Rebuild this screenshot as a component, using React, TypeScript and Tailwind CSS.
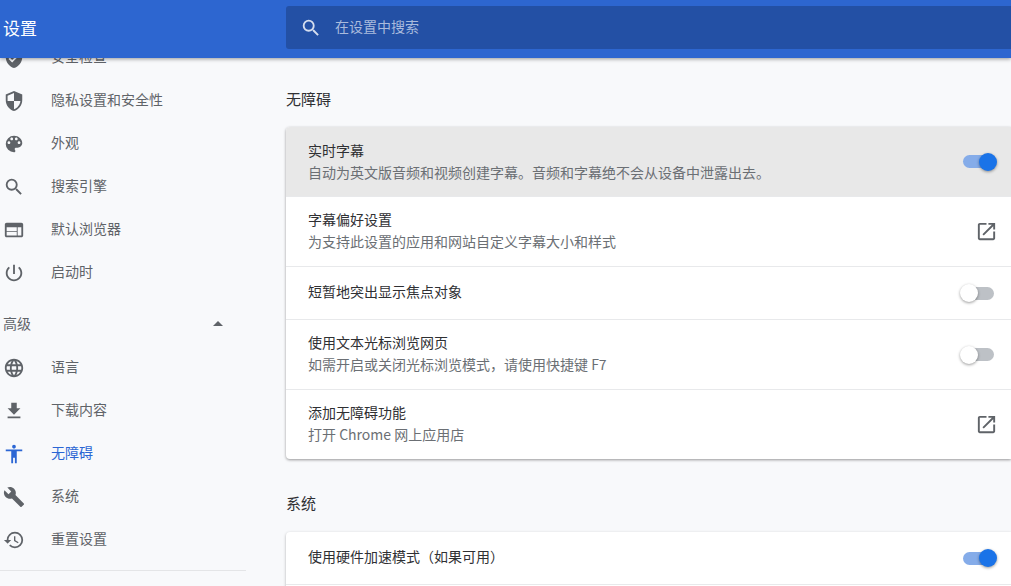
// Chrome 设置页 — 无障碍 section
const font = { cjk: "font-['Noto_Sans_CJK_SC','Noto_Sans',sans-serif]" };

const paths = {
  check:
    "M12 1L3 5v6c0 5.55 3.84 10.74 9 12 5.16-1.26 9-6.45 9-12V5l-9-4zm-2 16l-4-4 1.41-1.41L10 14.17l6.59-6.59L18 9l-8 8z",
  shield:
    "M12 1L3 5v6c0 5.55 3.84 10.74 9 12 5.16-1.26 9-6.45 9-12V5l-9-4zm0 10.99h7c-.53 4.12-3.28 7.79-7 8.94V12H5V6.3l7-3.11v8.8z",
  palette:
    "M12 3a9 9 0 0 0 0 18c.83 0 1.5-.67 1.5-1.5 0-.39-.15-.74-.39-1.01-.23-.26-.38-.61-.38-.99 0-.83.67-1.5 1.5-1.5H16c2.76 0 5-2.24 5-5 0-4.42-4.03-8-9-8zm-5.5 9c-.83 0-1.5-.67-1.5-1.5S5.67 9 6.5 9 8 9.67 8 10.5 7.33 12 6.5 12zm3-4C8.67 8 8 7.33 8 6.5S8.67 5 9.5 5s1.5.67 1.5 1.5S10.33 8 9.5 8zm5 0c-.83 0-1.5-.67-1.5-1.5S13.67 5 14.5 5s1.5.67 1.5 1.5S15.33 8 14.5 8zm3 4c-.83 0-1.5-.67-1.5-1.5S16.67 9 17.5 9s1.5.67 1.5 1.5-.67 1.5-1.5 1.5z",
  search:
    "M15.5 14h-.79l-.28-.27A6.471 6.471 0 0 0 16 9.5 6.5 6.5 0 1 0 9.5 16c1.61 0 3.09-.59 4.23-1.57l.27.28v.79l5 4.99L20.49 19l-4.99-5zm-6 0C7.01 14 5 11.99 5 9.5S7.01 5 9.5 5 14 7.01 14 9.5 11.99 14 9.5 14z",
  browser:
    "M20 4H4c-1.1 0-2 .9-2 2v12c0 1.1.9 2 2 2h16c1.1 0 2-.9 2-2V6c0-1.1-.9-2-2-2zm-5 14H4v-4h11v4zm0-5H4V9h11v4zm5 5h-4V9h4v9z",
  power:
    "M13 3h-2v10h2V3zm4.83 2.17l-1.42 1.42C17.99 7.86 19 9.81 19 12c0 3.87-3.13 7-7 7s-7-3.13-7-7c0-2.19 1.01-4.14 2.58-5.42L6.17 5.17C4.23 6.82 3 9.26 3 12c0 4.97 4.03 9 9 9s9-4.03 9-9c0-2.74-1.23-5.18-3.17-6.83z",
  globe:
    "M11.99 2C6.47 2 2 6.48 2 12s4.47 10 9.99 10C17.52 22 22 17.52 22 12S17.52 2 11.99 2zm6.93 6h-2.95a15.65 15.65 0 0 0-1.38-3.56A8.03 8.03 0 0 1 18.92 8zM12 4.04c.83 1.2 1.48 2.53 1.91 3.96h-3.82c.43-1.43 1.08-2.76 1.91-3.96zM4.26 14C4.1 13.36 4 12.69 4 12s.1-1.36.26-2h3.38c-.08.66-.14 1.32-.14 2 0 .68.06 1.34.14 2H4.26zm.82 2h2.95c.32 1.25.78 2.45 1.38 3.56A7.987 7.987 0 0 1 5.08 16zm2.95-8H5.08a7.987 7.987 0 0 1 4.33-3.56A15.65 15.65 0 0 0 8.03 8zM12 19.96c-.83-1.2-1.48-2.53-1.91-3.96h3.82c-.43 1.43-1.08 2.76-1.91 3.96zM14.34 14H9.66c-.09-.66-.16-1.32-.16-2 0-.68.07-1.35.16-2h4.68c.09.65.16 1.32.16 2 0 .68-.07 1.34-.16 2zm.25 5.56c.6-1.11 1.06-2.31 1.38-3.56h2.95a8.03 8.03 0 0 1-4.33 3.56zM16.36 14c.08-.66.14-1.32.14-2 0-.68-.06-1.34-.14-2h3.38c.16.64.26 1.31.26 2s-.1 1.36-.26 2h-3.38z",
  download: "M19 9h-4V3H9v6H5l7 7 7-7zM5 18v2h14v-2H5z",
  person: "M12 2c1.1 0 2 .9 2 2s-.9 2-2 2-2-.9-2-2 .9-2 2-2zm9 7h-6v13h-2v-6h-2v6H9V9H3V7h18v2z",
  wrench:
    "M22.7 19l-9.1-9.1c.9-2.3.4-5-1.5-6.9-2-2-5-2.4-7.4-1.3L9 6 6 9 1.6 4.7C.4 7.1.9 10.1 2.9 12.1c1.9 1.9 4.6 2.4 6.9 1.5l9.1 9.1c.4.4 1 .4 1.4 0l2.3-2.3c.5-.4.5-1.1.1-1.4z",
  history:
    "M13 3a9 9 0 0 0-9 9H1l3.89 3.89.07.14L9 12H6c0-3.87 3.13-7 7-7s7 3.13 7 7-3.13 7-7 7c-1.93 0-3.68-.79-4.94-2.06l-1.42 1.42A8.954 8.954 0 0 0 13 21a9 9 0 0 0 0-18zm-1 5v5l4.28 2.54.72-1.21-3.5-2.08V8H12z",
  open:
    "M19 19H5V5h7V3H5c-1.11 0-2 .9-2 2v14c0 1.1.89 2 2 2h14c1.1 0 2-.9 2-2v-7h-2v7zM14 3v2h3.59l-9.83 9.83 1.41 1.41L19 6.41V10h2V3h-7z",
};

function Icon({ d, className }: { d: string; className: string }) {
  return (
    <svg viewBox="0 0 24 24" fill="currentColor" className={className}>
      <path d={d} />
    </svg>
  );
}

function NavItem({ icon, label, active }: { icon: string; label: string; active?: boolean }) {
  return (
    <div className={`flex h-[43px] items-center pl-[3px] ${active ? "text-[#2b66d4]" : "text-[#5f6368]"}`}>
      <Icon d={icon} className="h-[22px] w-[22px] shrink-0" />
      <span className="ml-[26px] pb-[2px] text-[14px]">{label}</span>
    </div>
  );
}

function Toggle({ on }: { on?: boolean }) {
  return (
    <div className="relative mr-[14px] flex h-[18px] w-[34px] items-center">
      <div className={`h-[13px] rounded-full ${on ? "w-[32px] bg-[#85ace9]" : "w-[31px] bg-[#bdc1c6]"}`} />
      <div
        className={`absolute top-0 h-[18px] w-[18px] rounded-full shadow-[0_1px_3px_rgba(0,0,0,0.4)] ${
          on ? "right-0 bg-[#1a73e8]" : "-left-[3px] bg-white"
        }`}
      />
    </div>
  );
}

function OpenIcon() {
  return <Icon d={paths.open} className="mr-[13px] h-[23px] w-[23px] text-[#5f6368]" />;
}

function Row({
  title,
  sub,
  right,
  h,
  last,
  hover,
}: {
  title?: string;
  sub?: string;
  right?: React.ReactNode;
  h: string;
  last?: boolean;
  hover?: boolean;
}) {
  return (
    <div
      className={`flex ${h} items-center justify-between pl-[22px] ${last ? "" : "border-b border-[#e8e9eb]"} ${
        hover ? "border-[#e8e8e8] bg-[#e8e8e8]" : ""
      }`}
    >
      <div className={`${hover ? "pb-[2px]" : "pb-[4px]"} text-[14px] leading-[22px]`}>
        <div className="text-[#2f3033]">{title}</div>
        {sub && <div className="text-[#6b6f74]">{sub}</div>}
      </div>
      {right}
    </div>
  );
}

export default function App() {
  return (
    <div className={`flex h-[586px] w-[1011px] flex-col overflow-hidden bg-[#f8f9fb] ${font.cjk}`}>
      <header className="relative z-10 flex h-[58px] shrink-0 bg-[#2d66d0] shadow-[0_1px_4px_rgba(0,0,0,0.4)]">
        <div className="w-[286px] pl-[3px] pt-[14px] text-[17px] leading-[28px] text-white">设置</div>
        <div className="mt-[6px] flex h-[43px] flex-1 items-center rounded-l-[3px] bg-[#2350a5] pl-[14px]">
          <Icon d={paths.search} className="h-[22px] w-[22px] text-[#d5deef]" />
          <span className="ml-[13px] pb-[2px] text-[14px] text-[#a9bbdd]">在设置中搜索</span>
        </div>
      </header>

      <div className="flex min-h-0 flex-1">
        <aside className="w-[246px] shrink-0">
          <nav className="-mt-[22px]">
            <NavItem icon={paths.check} label="安全检查" />
            <NavItem icon={paths.shield} label="隐私设置和安全性" />
            <NavItem icon={paths.palette} label="外观" />
            <NavItem icon={paths.search} label="搜索引擎" />
            <NavItem icon={paths.browser} label="默认浏览器" />
            <NavItem icon={paths.power} label="启动时" />
            <div className="mt-[9px] flex h-[43px] items-center justify-between pb-[2px] pl-[3px] pr-[23px] text-[14px] text-[#5f6368]">
              <span>高级</span>
              <div className="h-0 w-0 border-x-[5px] border-b-[5px] border-x-transparent border-b-[#5f6368]" />
            </div>
            <NavItem icon={paths.globe} label="语言" />
            <NavItem icon={paths.download} label="下载内容" />
            <NavItem icon={paths.person} label="无障碍" active />
            <NavItem icon={paths.wrench} label="系统" />
            <NavItem icon={paths.history} label="重置设置" />
            <div className="mt-[9px] border-t border-[#e4e5e7]" />
          </nav>
        </aside>

        <main className="min-w-0 flex-1 pl-[40px]">
          <h2 className="mt-[29px] mb-[16px] text-[15px] leading-[24px] font-normal text-[#2f3033]">无障碍</h2>
          <section className="overflow-hidden rounded-l-[4px] bg-white shadow-[0_1px_3px_rgba(0,0,0,0.4)]">
            <Row
              hover
              h="h-[70px]"
              title="实时字幕"
              sub="自动为英文版音频和视频创建字幕。音频和字幕绝不会从设备中泄露出去。"
              right={<Toggle on />}
            />
            <Row h="h-[70px]" title="字幕偏好设置" sub="为支持此设置的应用和网站自定义字幕大小和样式" right={<OpenIcon />} />
            <Row h="h-[53px]" title="短暂地突出显示焦点对象" right={<Toggle />} />
            <Row
              h="h-[70px]"
              title="使用文本光标浏览网页"
              sub="如需开启或关闭光标浏览模式，请使用快捷键 F7"
              right={<Toggle />}
            />
            <Row last h="h-[69px]" title="添加无障碍功能" sub="打开 Chrome 网上应用店" right={<OpenIcon />} />
          </section>

          <h2 className="mt-[32px] mb-[17px] text-[15px] leading-[24px] font-normal text-[#2f3033]">系统</h2>
          <section className="rounded-l-[4px] bg-white shadow-[0_1px_3px_rgba(0,0,0,0.3)]">
            <Row h="h-[53px]" title="使用硬件加速模式（如果可用）" right={<Toggle on />} />
            <Row last h="h-[53px]" />
          </section>
        </main>
      </div>
    </div>
  );
}
